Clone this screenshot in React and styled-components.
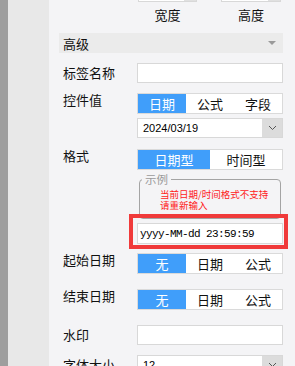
import styled, { createGlobalStyle } from 'styled-components'

const GlobalStyle = createGlobalStyle`
  body {
    margin: 0;
    overflow: hidden;
    font-family: "Noto Sans CJK SC", "Liberation Sans", sans-serif;
  }
`

const Page = styled.div`
  display: flex;
  width: 295px;
  height: 366px;
  overflow: hidden;
`

const Rail = styled.div`
  width: 8px;
  background: #9e9e9e;
`

const Side = styled.div`
  width: 41px;
  background: #e8e8e8;
`

const Panel = styled.div`
  flex: 1;
  display: flex;
  flex-direction: column;
  padding: 0 12px 0 10px;
  background: #f4f4f6;
  color: #111;

  & > * {
    flex-shrink: 0;
  }
`

const SizeRow = styled.div`
  display: grid;
  grid-template-columns: 59px 60px;
  column-gap: 24px;
  padding-left: 79px;
  height: 33px;
`

const SizeCol = styled.div`
  display: flex;
  flex-direction: column;
  align-items: center;
`

const SizeBox = styled.div`
  display: flex;
  justify-content: flex-end;
  width: 100%;
  height: 20px;
  margin-top: -18px;
  box-sizing: border-box;
  border: 1px solid #d8d8d8;
  background: #fff;
`

const Spin = styled.div`
  width: 12px;
  background: #e0e0e0;
`

const SizeLabel = styled.div`
  margin-top: 6px;
  font-size: 13px;
  line-height: 14px;
`

const Header = styled.div`
  display: flex;
  align-items: center;
  justify-content: space-between;
  height: 20px;
  padding: 0 7px 0 4px;
  background: #ebebeb;
  font-size: 13px;
`

const Caret = styled.span`
  width: 0;
  height: 0;
  border-left: 4px solid transparent;
  border-right: 4px solid transparent;
  border-top: 4px solid #9a9a9a;
`

const Row = styled.div`
  display: flex;
  margin-top: ${p => p.$gap}px;
`

const Label = styled.div`
  width: 74px;
  padding-left: 4px;
  font-size: 13px;
  line-height: ${p => (p.$tall ? 20 : 14)}px;
  white-space: nowrap;
`

const Control = styled.div`
  width: 146px;
  display: flex;
  flex-direction: column;

  & > * {
    flex-shrink: 0;
  }
`

const Input = styled.div`
  height: ${p => p.$h || 20}px;
  box-sizing: border-box;
  border: 1px solid #d8d8d8;
  background: #fff;
  display: flex;
  align-items: center;
  padding-left: 2px;
`

const Mono = styled.span`
  font-family: "Liberation Mono", "DejaVu Sans Mono", monospace;
  font-size: 11px;
  letter-spacing: -0.6px;
  color: #000;
`

const Segments = styled.div`
  display: flex;
  height: 21px;
  box-sizing: border-box;
  border: 1px solid #dadada;
  background: #fff;
`

const Segment = styled.div`
  flex: 1;
  display: flex;
  align-items: center;
  justify-content: center;
  font-size: 13px;
  background: ${p => (p.$on ? '#409efa' : '#fff')};
  color: ${p => (p.$on ? '#fff' : '#111')};
`

const Select = styled.div`
  display: flex;
  height: 20px;
  margin-top: ${p => p.$gap || 0}px;
  box-sizing: border-box;
  border: 1px solid #d8d8d8;
  background: #fff;
`

const SelectValue = styled.div`
  flex: 1;
  display: flex;
  align-items: center;
  padding-left: 5px;
  font-family: "Liberation Sans", sans-serif;
  font-size: 11px;
  color: #000;
`

const SelectArrow = styled.div`
  width: 20px;
  display: flex;
  align-items: center;
  justify-content: center;
  background: #dcdcdc;
`

const Example = styled.fieldset`
  margin: 3px 2px 0;
  padding: 0 4px 7px 2px;
  border: 1px solid #a4a4a4;
  border-radius: 4px;
  min-width: 0;
`

const Legend = styled.legend`
  padding: 0 3px;
  font-size: 11.5px;
  line-height: 12px;
  color: #9a9a9a;
`

const Warning = styled.div`
  margin: 4px 0 0 18px;
  font-size: 9.5px;
  line-height: 11px;
  color: #ff1a1a;
  white-space: nowrap;
`

const Marked = styled.div`
  position: relative;
  margin-top: 4px;
`

const Highlight = styled.div`
  position: absolute;
  left: -8px;
  right: -5px;
  top: -9px;
  bottom: -5px;
  border: 4px solid #f03a3a;
  pointer-events: none;
`

function Chevron() {
  return (
    <svg width="9" height="6" viewBox="0 0 9 6">
      <path d="M1 1l3.5 3.5L8 1" fill="none" stroke="#555" strokeWidth="1" />
    </svg>
  )
}

function Seg({ items, on = 0 }) {
  return (
    <Segments>
      {items.map((t, i) => (
        <Segment key={t} $on={i === on}>{t}</Segment>
      ))}
    </Segments>
  )
}

export default function App() {
  return (
    <Page>
      <GlobalStyle />
      <Rail />
      <Side />
      <Panel>
        <SizeRow>
          <SizeCol>
            <SizeBox><Spin /></SizeBox>
            <SizeLabel>宽度</SizeLabel>
          </SizeCol>
          <SizeCol>
            <SizeBox><Spin /></SizeBox>
            <SizeLabel>高度</SizeLabel>
          </SizeCol>
        </SizeRow>

        <Header>
          <span>高级</span>
          <Caret />
        </Header>

        <Row $gap={10}>
          <Label $tall>标签名称</Label>
          <Control><Input /></Control>
        </Row>

        <Row $gap={10}>
          <Label>控件值</Label>
          <Control>
            <Seg items={['日期', '公式', '字段']} />
            <Select $gap={4}>
              <SelectValue>2024/03/19</SelectValue>
              <SelectArrow><Chevron /></SelectArrow>
            </Select>
          </Control>
        </Row>

        <Row $gap={11}>
          <Label>格式</Label>
          <Control>
            <Seg items={['日期型', '时间型']} />
            <Example>
              <Legend>示例</Legend>
              <Warning>
                当前日期/时间格式不支持<br />请重新输入
              </Warning>
            </Example>
            <Marked>
              <Input $h={21}>
                <Mono>yyyy-MM-dd 23:59:59</Mono>
              </Input>
              <Highlight />
            </Marked>
          </Control>
        </Row>

        <Row $gap={9}>
          <Label>起始日期</Label>
          <Control><Seg items={['无', '日期', '公式']} /></Control>
        </Row>

        <Row $gap={15}>
          <Label>结束日期</Label>
          <Control><Seg items={['无', '日期', '公式']} /></Control>
        </Row>

        <Row $gap={15}>
          <Label $tall>水印</Label>
          <Control><Input /></Control>
        </Row>

        <Row $gap={10}>
          <Label $tall>字体大小</Label>
          <Control>
            <Select>
              <SelectValue>12</SelectValue>
              <SelectArrow><Chevron /></SelectArrow>
            </Select>
          </Control>
        </Row>
      </Panel>
    </Page>
  )
}
